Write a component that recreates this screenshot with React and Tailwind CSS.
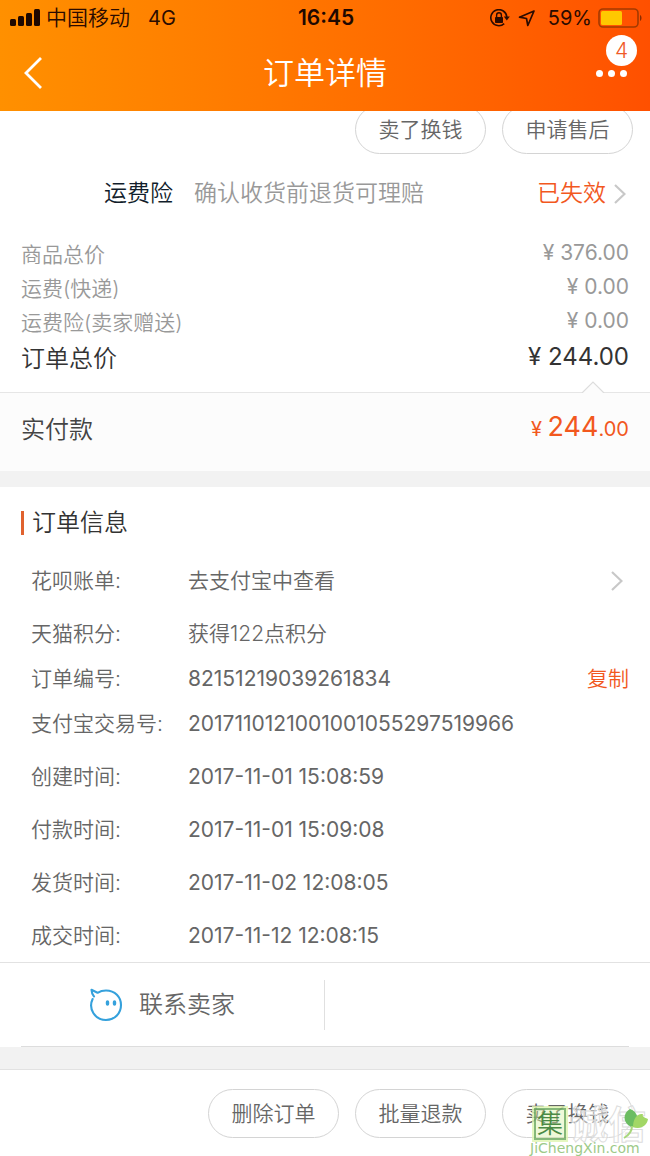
import React from "react";

const prices = [
  { label: "商品总价", value: "376.00" },
  { label: "运费(快递)", value: "0.00" },
  { label: "运费险(卖家赠送)", value: "0.00" }
];

const infoGroups = [
  [{ label: "花呗账单:", value: "去支付宝中查看", link: true }],
  [
    { label: "天猫积分:", value: "获得122点积分" },
    { label: "订单编号:", value: "82151219039261834", copy: true, number: true },
    { label: "支付宝交易号:", value: "2017110121001001055297519966", number: true }
  ],
  [{ label: "创建时间:", value: "2017-11-01 15:08:59", number: true }],
  [{ label: "付款时间:", value: "2017-11-01 15:09:08", number: true }],
  [{ label: "发货时间:", value: "2017-11-02 12:08:05", number: true }],
  [{ label: "成交时间:", value: "2017-11-12 12:08:15", number: true }]
];

function Chevron() {
  return (
    <svg className="w-3 h-5 shrink-0" viewBox="0 0 12 20" fill="none" stroke="#c8c8c8" strokeWidth="2.2">
      <path d="M1 1l9.5 9L1 19" />
    </svg>
  );
}

function PillButton({ children }) {
  return (
    <button className="w-[131px] h-[49px] rounded-full border border-[#d4d4d4] bg-white text-[21px] text-[#666]">
      {children}
    </button>
  );
}

function StatusBar() {
  return (
    <div className="grid grid-cols-3 items-center h-9 pl-2.5 pr-2 text-[21px] text-[#2b0b00]">
      <div className="flex items-center">
        <svg className="w-[30px] h-[18px] mr-1.5" viewBox="0 0 30 18" fill="#1e0800">
          <rect x="0" y="10" width="6" height="7" rx="1.5" />
          <rect x="8" y="7" width="6" height="10" rx="1.5" />
          <rect x="16" y="4" width="6" height="13" rx="1.5" />
          <rect x="24" y="0" width="6" height="17" rx="1.5" />
        </svg>
        <span>中国移动</span>
        <span className="ml-[18px] text-[20px] font-normal">4G</span>
      </div>
      <div className="text-center text-[21px] font-semibold text-[#1e0800]">16:45</div>
      <div className="flex items-center justify-end">
        {/* rotation lock */}
        <svg className="w-5 h-[18px] mr-2" viewBox="0 0 20 18" fill="none" stroke="#2b0b00" strokeWidth="1.6">
          <path d="M14.2 14.6A8 8 0 1 1 16.8 8" />
          <path d="M13.8 7.6h6l-3 4z" fill="#2b0b00" stroke="none" />
          <rect x="5" y="8" width="8" height="6" rx="0.8" fill="#2b0b00" stroke="none" />
          <path d="M6.6 8V6.2a2.4 2.4 0 0 1 4.8 0V8" strokeWidth="1.4" />
        </svg>
        {/* location */}
        <svg className="w-[18px] h-[18px] mr-3" viewBox="0 0 18 18" fill="none" stroke="#2b0b00" strokeWidth="1.7" strokeLinejoin="round">
          <path d="M16 2L1.5 8.2l7 1.3 1.3 7z" />
        </svg>
        <span className="text-[20px] font-normal mr-1.5">59%</span>
        <svg className="w-11 h-5" viewBox="0 0 44 20" fill="none">
          <rect x="1" y="1" width="39" height="18" rx="4" stroke="#a33a00" strokeWidth="1.6" />
          <rect x="3" y="3" width="21" height="14" rx="1.5" fill="#ffc800" />
          <path d="M42 7c2 1 2 5 0 6z" fill="#8a2c00" />
        </svg>
      </div>
    </div>
  );
}

function Header() {
  return (
    <header className="relative z-10 h-[111px] bg-linear-to-r from-[#ff9000] to-[#ff5000]">
      <StatusBar />
      <div className="flex items-center justify-between h-[74px] px-[23px] text-white">
        <button aria-label="返回" className="w-10 h-9">
          <svg className="w-5 h-9" viewBox="0 0 20 36" fill="none" stroke="#fff" strokeWidth="2.8">
            <path d="M18 3L3 18l15 15" />
          </svg>
        </button>
        <h1 className="text-[31px]">订单详情</h1>
        <button aria-label="更多" className="relative flex items-center justify-end gap-[5px] w-10 h-9">
          <span className="w-[7px] h-[7px] rounded-full bg-white"></span>
          <span className="w-[7px] h-[7px] rounded-full bg-white"></span>
          <span className="w-[7px] h-[7px] rounded-full bg-white"></span>
          <span className="absolute -top-5 -right-2.5 w-[31px] h-[31px] rounded-full bg-white text-[#f05a28] text-[21px] leading-8 text-center">
            4
          </span>
        </button>
      </div>
    </header>
  );
}

function Watermark() {
  return (
    <div className="absolute right-0 bottom-0 w-[120px] h-12 pointer-events-none">
      <div className="flex items-center h-8 pl-1">
        <span className="w-8 h-8 border-2 border-[#6aa860]/80 outline-2 outline-[#dff5b0]/80 bg-[#d5f0a0]/40 text-[26px] leading-7 text-center text-[#4b8a45]">
          集
        </span>
        <span className="ml-1 text-[38px] leading-8 font-bold text-white/50 [-webkit-text-stroke:1px_#dcdcdc]">诚信</span>
      </div>
      <svg className="absolute right-0 top-0 w-7 h-8" viewBox="0 0 28 32">
        <path d="M9 19C0 14 1 5 8 1c8 3 10 11 4 18z" fill="#6cbd62" />
        <path d="M11 19c0-8 4-14 10-13-1 2 0 3 5 5-1 7-8 11-15 8z" fill="#a2d766" />
        <path d="M10 18c0 6-3 9-8 12" fill="none" stroke="#a8d77c" strokeWidth="2" />
      </svg>
      <div className="h-4 font-['DejaVu_Sans',sans-serif] font-normal text-[14px] leading-4 text-[#9dca88] whitespace-nowrap">
        JiChengXin.com
      </div>
    </div>
  );
}

export default function App() {
  return (
    <div className="min-h-screen overflow-hidden bg-white font-['Inter','Noto_Sans_CJK_SC',sans-serif] font-[350] text-[#666]">
      <Header />

      {/* Item actions, partly scrolled under the header */}
      <div className="flex justify-end gap-4 -mt-1.5 pr-[17px]">
        <PillButton>卖了换钱</PillButton>
        <PillButton>申请售后</PillButton>
      </div>

      {/* Freight insurance */}
      <a href="#insurance" className="flex items-center h-[79px] pl-[104px] pr-6 text-[23px]">
        <span className="text-[#111d2b]">运费险</span>
        <span className="ml-[21px] text-[#999]">确认收货前退货可理赔</span>
        <span className="ml-auto mr-2 text-[#f2581e]">已失效</span>
        <Chevron />
      </a>

      {/* Prices */}
      <dl className="pt-1 pb-4 px-[21px]">
        {prices.map((p) => (
          <div key={p.label} className="flex items-start justify-between h-[34px] text-[21px] text-[#999]">
            <dt className="leading-[36px]">{p.label}</dt>
            <dd className="leading-[32px] font-normal">¥ {p.value}</dd>
          </div>
        ))}
        <div className="flex items-start justify-between h-[37px] text-[24px] text-[#333]">
          <dt className="leading-[40px]">订单总价</dt>
          <dd className="leading-[36px] font-normal">¥ 244.00</dd>
        </div>
      </dl>

      <div className="relative flex items-center justify-between h-[79px] px-[21px] pb-1 border-t border-[#e6e6e6] bg-[#fcfcfc]">
        <svg className="absolute right-[45px] -top-3 w-6 h-3" viewBox="0 0 24 12" fill="#fcfcfc" stroke="#ddd" strokeWidth="1.2">
          <path d="M1 12L12 1l11 11" />
        </svg>
        <span className="text-[24px] text-[#444]">实付款</span>
        <span className="pb-1.5 text-[20px] font-normal text-[#f2581e]">
          ¥ <span className="text-[27px]">244</span>.00
        </span>
      </div>
      <div className="h-4 bg-[#f2f2f2]"></div>

      {/* Order info */}
      <section className="pb-1">
        <h2 className="flex items-center h-[71px] pl-[21px] text-[24px] text-[#333]">
          <span className="w-[3px] h-6 mr-2 bg-[#e0622e]"></span>
          订单信息
        </h2>
        <div className="flex flex-col gap-2 pl-[31px] pr-[21px] text-[21px]">
          {infoGroups.map((group, i) => (
            <dl key={i}>
              {group.map((row) => (
                <div key={row.label} className="flex items-center h-[45px]">
                  <dt className="w-[157px] shrink-0">{row.label}</dt>
                  <dd className={row.number ? "flex-1 font-normal" : "flex-1"}>{row.value}</dd>
                  {row.link && (
                    <button aria-label="查看账单" className="mr-1.5">
                      <Chevron />
                    </button>
                  )}
                  {row.copy && <button className="text-[#f2581e]">复制</button>}
                </div>
              ))}
            </dl>
          ))}
        </div>
      </section>

      {/* Contact */}
      <div className="flex items-center h-[84px] border-t border-[#e2e2e2]">
        <button className="flex items-center justify-center w-1/2 h-[50px] border-r border-[#e0e0e0] text-[24px]">
          <svg className="w-[34px] h-[34px] mr-4" viewBox="0 0 34 34" fill="none" stroke="#35a1dc" strokeWidth="2.1" strokeLinecap="round" strokeLinejoin="round">
            <path d="M3.600 11C-1 21 6 32 17 32c9 0 15-7 15-15S26 2.500 17 2.500c-3 0-6 .8-8.500 2.300L2.500 1.800C2.700 4.500 3.500 7 5 8.500" />
            <path d="M18.500 14v2M25.500 14v2" strokeWidth="3.400" />
          </svg>
          联系卖家
        </button>
      </div>
      <div className="mx-[21px] border-t border-[#ddd]"></div>
      <div className="h-[22px] bg-[#f2f2f2]"></div>

      <footer className="relative flex items-start justify-end gap-4 h-[87px] pt-[19px] pr-[17px] border-t border-[#e2e2e2] overflow-hidden">
        <PillButton>删除订单</PillButton>
        <PillButton>批量退款</PillButton>
        <PillButton>卖了换钱</PillButton>
        <Watermark />
      </footer>
    </div>
  );
}
